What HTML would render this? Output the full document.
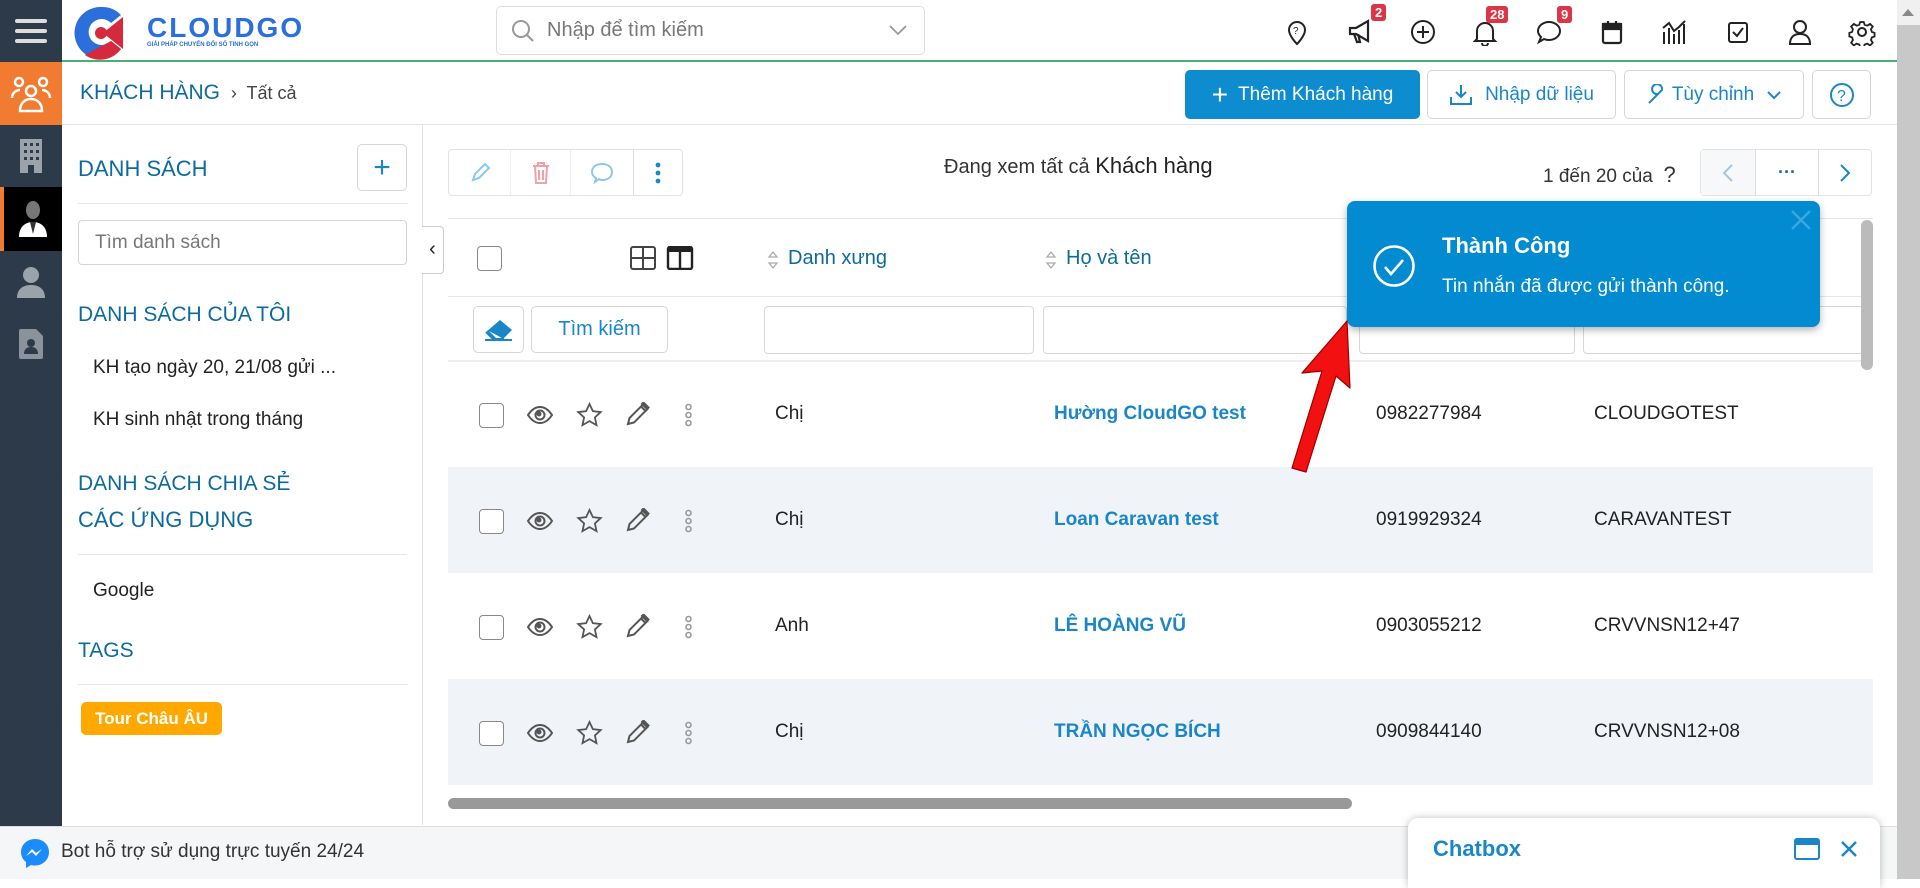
<!DOCTYPE html>
<html><head><meta charset="utf-8">
<style>
*{box-sizing:border-box;margin:0;padding:0}
body{width:1920px;height:879px;overflow:hidden;background:#fff;font-family:"Liberation Sans","Noto Sans CJK SC",sans-serif;color:#222;position:relative}
.abs{position:absolute}
.side{left:0;top:0;width:62px;height:826px;background:#2c3a4a}
.sideitem{position:absolute;left:0;width:62px;display:flex;align-items:center;justify-content:center}
.top{left:62px;top:0;width:1835px;height:62px;border-bottom:2px solid #4caf72;background:#fff}
.hdr2{left:62px;top:62px;width:1835px;height:63px;border-bottom:1px solid #e2e2e2}
.btn{position:absolute;border:1px solid #d6d6d6;border-radius:5px;background:#fff;display:flex;align-items:center;justify-content:center;font-size:19px;color:#1a86c8}
.h{font-size:21px;color:#0d6a9c;position:absolute;left:78px}
.item{font-size:19px;position:absolute;left:93px;color:#222}
.line{position:absolute;height:1px;background:#e6e6e6}
.icon{position:absolute;top:18px;width:28px;height:28px}
.badge{position:absolute;background:#dc3545;color:#fff;font-size:13px;padding:1px 4px;border-radius:3px;font-weight:bold}
.row{position:absolute;left:448px;width:1425px;height:106px}
.cb{position:absolute;width:25px;height:25px;border:1.5px solid #888;border-radius:4px;background:#fff}
.inp{position:absolute;top:306px;height:48px;border:1px solid #d8d8d8;border-radius:4px}
</style></head><body>

<div class="abs side"></div>
<div class="sideitem" style="top:0;height:62px">
<svg width="36" height="30"><rect x="2" y="3" width="32" height="4" rx="2" fill="#ddd"/><rect x="2" y="13" width="32" height="4" rx="2" fill="#ddd"/><rect x="2" y="23" width="32" height="4" rx="2" fill="#ddd"/></svg></div>
<div class="sideitem" style="top:62px;height:63px;background:#f07b31">
<svg width="44" height="40" fill="none" stroke="#fff" stroke-width="2.5"><circle cx="10" cy="8" r="4"/><circle cx="34" cy="8" r="4"/><circle cx="22" cy="17" r="5"/><path d="M3 24c0-5 4-8 8-8M41 24c0-5-4-8-8-8M11 37c0-8 5-12 11-12s11 4 11 12z"/></svg></div>
<div class="sideitem" style="top:125px;height:62px"><svg width="22" height="34"><rect x="0" y="0" width="22" height="34" fill="#9aa3ab"/><g fill="#2c3a4a"><rect x="4" y="4" width="3" height="3"/><rect x="10" y="4" width="3" height="3"/><rect x="16" y="4" width="3" height="3"/><rect x="4" y="11" width="3" height="3"/><rect x="10" y="11" width="3" height="3"/><rect x="16" y="11" width="3" height="3"/><rect x="4" y="18" width="3" height="3"/><rect x="10" y="18" width="3" height="3"/><rect x="16" y="18" width="3" height="3"/><rect x="8" y="26" width="6" height="8"/></g></svg></div>
<div class="sideitem" style="top:187px;height:64px;background:#000;border-left:4px solid #f07b31"><svg width="30" height="36"><ellipse cx="15" cy="9" rx="7" ry="9" fill="#777"/><path d="M1 36c0-10 6-15 14-15s14 5 14 15z" fill="#fff"/><path d="M12 21l3 12 3-12z" fill="#333"/></svg></div>
<div class="sideitem" style="top:251px;height:61px"><svg width="30" height="32" fill="#9aa3ab"><circle cx="15" cy="9" r="8"/><path d="M1 32c0-9 6-13 14-13s14 4 14 13z"/></svg></div>
<div class="sideitem" style="top:312px;height:64px"><svg width="24" height="30"><path d="M2 0h15l7 7v21a2 2 0 0 1-2 2H2a2 2 0 0 1-2-2V2a2 2 0 0 1 2-2z" fill="#8a939c"/><circle cx="12" cy="14" r="4" fill="#2c3a4a"/><path d="M5 25c0-5 3-7 7-7s7 2 7 7z" fill="#2c3a4a"/></svg></div>

<div class="abs top"></div>
<svg class="abs" style="left:71px;top:5px" width="64" height="56"><path d="M30 2a26 26 0 1 0 20 42l-10-8a13 13 0 1 1 0-18l10-8A26 26 0 0 0 30 2z" fill="#2a6fdb"/><path d="M52 12L32 28l20 16z" fill="#d42a3c"/><circle cx="30" cy="28" r="6" fill="#d42a3c"/><path d="M14 50a26 26 0 0 0 36-6l-10-8z" fill="#d42a3c"/></svg>
<div class="abs" style="left:147px;top:12px;font-size:28px;font-weight:bold;color:#2a6fdb;letter-spacing:2px">CLOUDGO</div>
<div class="abs" style="left:147px;top:42px;font-size:6px;color:#2a6fdb;font-weight:bold">GIẢI PHÁP CHUYỂN ĐỔI SỐ TINH GỌN</div>
<div class="abs" style="left:496px;top:6px;width:429px;height:49px;border:1px solid #ddd;border-radius:5px"></div>
<svg class="abs" style="left:510px;top:18px" width="26" height="26" fill="none" stroke="#999" stroke-width="2"><circle cx="11" cy="11" r="8"/><path d="M17 17l6 6"/></svg>
<div class="abs" style="left:547px;top:19px;font-size:20px;color:#777">Nhập để tìm kiếm</div>
<svg class="abs" style="left:888px;top:24px" width="20" height="12" fill="none" stroke="#999" stroke-width="1.8"><path d="M2 2l8 8 8-8"/></svg>

<svg class="icon" style="left:1283px" fill="none" stroke="#222" stroke-width="2"><path d="M14 26s-8-8-8-14a8 8 0 0 1 16 0c0 6-8 14-8 14z"/><text x="10" y="16" font-size="10" fill="#222" stroke="none">?</text></svg>
<svg class="icon" style="left:1346px" fill="none" stroke="#222" stroke-width="2.2"><path d="M4 10h6l12-7v20l-12-7H4zM8 16l3 8h3l-2-8"/></svg>
<div class="badge" style="left:1371px;top:4px">2</div>
<svg class="icon" style="left:1409px" fill="none" stroke="#222" stroke-width="2"><circle cx="14" cy="14" r="11"/><path d="M14 8v12M8 14h12"/></svg>
<svg class="icon" style="left:1471px" fill="none" stroke="#222" stroke-width="2"><path d="M6 21V13a8 8 0 0 1 16 0v8l2 2H4zM11 25a3 3 0 0 0 6 0"/></svg>
<div class="badge" style="left:1486px;top:6px">28</div>
<svg class="icon" style="left:1535px" fill="none" stroke="#222" stroke-width="2"><path d="M14 4c6 0 11 4 11 9s-5 9-11 9c-2 0-3 0-5-1l-5 3 2-5c-2-2-3-4-3-6 0-5 5-9 11-9z"/></svg>
<div class="badge" style="left:1557px;top:6px">9</div>
<svg class="icon" style="left:1598px" fill="none" stroke="#222" stroke-width="2.2"><rect x="5" y="6" width="18" height="19" rx="2"/><path d="M5 10h18M10 3v5M18 3v5" /><rect x="5" y="6" width="18" height="5" fill="#222"/></svg>
<svg class="icon" style="left:1660px" fill="none" stroke="#222" stroke-width="2"><path d="M4 26V14M9 26V10M14 26V16M19 26V12M24 26V6M3 10l6-5 5 8 5-4 6-6"/></svg>
<svg class="icon" style="left:1724px" fill="none" stroke="#222" stroke-width="2"><rect x="5" y="5" width="18" height="19" rx="2"/><path d="M9 14l4 4 6-8"/></svg>
<svg class="icon" style="left:1786px" fill="none" stroke="#222" stroke-width="2"><circle cx="14" cy="9" r="6"/><path d="M4 26c0-7 4-10 10-10s10 3 10 10z"/></svg>
<svg class="icon" style="left:1848px" fill="none" stroke="#222" stroke-width="2"><circle cx="14" cy="14" r="4"/><path d="M12 3h4l1 3 3 1 3-2 3 3-2 3 1 3 3 1v4l-3 1-1 3 2 3-3 3-3-2-3 1-1 3h-4l-1-3-3-1-3 2-3-3 2-3-1-3-3-1v-4l3-1 1-3-2-3 3-3 3 2 3-1z" transform="scale(.9) translate(1.5 1.5)"/></svg>

<div class="abs hdr2"></div>
<div class="abs" style="left:80px;top:81px;font-size:21px;color:#0d6a9c">KHÁCH HÀNG <span style="color:#444;font-size:18px">&nbsp;›&nbsp; Tất cả</span></div>
<div class="btn" style="left:1185px;top:70px;width:235px;height:49px;background:#0d8dd0;border-color:#0d8dd0;color:#fff"><span style="font-size:28px;margin-right:10px;font-weight:300">+</span>Thêm Khách hàng</div>
<div class="btn" style="left:1427px;top:70px;width:189px;height:49px"><svg width="24" height="24" fill="none" stroke="#1a86c8" stroke-width="2" style="margin-right:12px"><path d="M12 2v12M7 9l5 5 5-5M2 14v7h20v-7"/></svg>Nhập dữ liệu</div>
<div class="btn" style="left:1624px;top:70px;width:180px;height:49px"><svg width="22" height="22" fill="none" stroke="#1a86c8" stroke-width="2" style="margin-right:4px"><path d="M3 19l9-9a5 5 0 1 1 4-4l-9 9z"/></svg>Tùy chỉnh<svg width="16" height="10" fill="none" stroke="#1a86c8" stroke-width="2" style="margin-left:12px"><path d="M2 2l6 6 6-6"/></svg></div>
<div class="btn" style="left:1812px;top:70px;width:59px;height:49px"><svg width="26" height="26" fill="none" stroke="#1a86c8" stroke-width="2"><circle cx="13" cy="13" r="11"/><text x="8" y="19" font-size="16" fill="#1a86c8" stroke="none">?</text></svg></div>

<div class="abs" style="left:422px;top:125px;width:1px;height:700px;background:#e2e2e2"></div>
<div class="h" style="top:156px;font-size:22px">DANH SÁCH</div>
<div class="btn" style="left:357px;top:144px;width:50px;height:47px;font-size:30px;font-weight:300">+</div>
<div class="line" style="left:78px;top:203px;width:329px"></div>
<div class="abs" style="left:78px;top:220px;width:329px;height:45px;border:1px solid #d6d6d6;border-radius:4px;font-size:19px;color:#777;padding:11px 0 0 16px">Tìm danh sách</div>
<div class="h" style="top:303px">DANH SÁCH CỦA TÔI</div>
<div class="item" style="top:357px">KH tạo ngày 20, 21/08 gửi ...</div>
<div class="item" style="top:409px">KH sinh nhật trong tháng</div>
<div class="abs" style="left:78px;top:470px;height:20px;overflow:hidden;width:300px"><div style="font-size:21px;color:#0d6a9c;line-height:24px;margin-top:2px">DANH SÁCH CHIA SẺ</div></div>
<div class="h" style="top:507px;font-size:22px">CÁC ỨNG DỤNG</div>
<div class="line" style="left:78px;top:554px;width:329px"></div>
<div class="item" style="top:580px">Google</div>
<div class="h" style="top:639px">TAGS</div>
<div class="line" style="left:78px;top:684px;width:329px"></div>
<div class="abs" style="left:81px;top:702px;width:141px;height:33px;background:#ffa800;border-radius:5px;color:#fff;font-weight:bold;font-size:17px;text-align:center;line-height:33px">Tour Châu ÂU</div>
<div class="abs" style="left:422px;top:226px;width:22px;height:48px;border:1px solid #ccc;border-left:none;border-radius:0 4px 4px 0;background:#fff;font-size:20px;text-align:center;line-height:44px">‹</div>

<div class="abs" style="left:448px;top:149px;width:235px;height:47px;border:1px solid #e2e2e2;border-radius:4px;display:flex">
<div style="width:62px;border-right:1px solid #eee;display:flex;align-items:center;justify-content:center"><svg width="22" height="22" fill="none" stroke="#8cc8ec" stroke-width="2"><path d="M4 18l2-6 10-10 4 4-10 10z"/></svg></div>
<div style="width:60px;border-right:1px solid #eee;display:flex;align-items:center;justify-content:center"><svg width="20" height="24" fill="none" stroke="#f2a0a8" stroke-width="2"><path d="M2 5h16M7 5V2h6v3M4 5l1 17h10l1-17M8 9v10M12 9v10"/></svg></div>
<div style="width:63px;border-right:1px solid #ddd;display:flex;align-items:center;justify-content:center"><svg width="24" height="22" fill="none" stroke="#8cc8ec" stroke-width="2"><path d="M12 2c6 0 10 3 10 8s-4 8-10 8c-1 0-2 0-3-1l-4 3 1-4c-2-1-4-3-4-6 0-5 4-8 10-8z"/></svg></div>
<div style="flex:1;display:flex;align-items:center;justify-content:center"><svg width="6" height="22" fill="#1a86c8"><circle cx="3" cy="3" r="2.4"/><circle cx="3" cy="11" r="2.4"/><circle cx="3" cy="19" r="2.4"/></svg></div>
</div>
<div class="abs" style="left:944px;top:153px;font-size:20px;color:#333">Đang xem tất cả <span style="font-size:22px;color:#222">Khách hàng</span></div>
<div class="abs" style="left:1543px;top:162px;font-size:19px;color:#333">1 đến 20 của &nbsp;<span style="font-size:22px">?</span></div>
<div class="abs" style="left:1700px;top:149px;width:172px;height:47px;border:1px solid #e2e2e2;border-radius:4px;display:flex">
<div style="width:55px;background:#f7f8f9;border-right:1px solid #ddd;display:flex;align-items:center;justify-content:center"><svg width="12" height="20" fill="none" stroke="#9cc8e8" stroke-width="2"><path d="M10 2L2 10l8 8"/></svg></div>
<div style="width:63px;border-right:1px solid #ddd;display:flex;align-items:center;justify-content:center;color:#1a6aa8;font-weight:bold;font-size:18px">···</div>
<div style="flex:1;display:flex;align-items:center;justify-content:center"><svg width="12" height="20" fill="none" stroke="#1a86c8" stroke-width="2"><path d="M2 2l8 8-8 8"/></svg></div>
</div>

<div class="line" style="left:448px;top:218px;width:1425px"></div>
<div class="cb" style="left:477px;top:246px"></div>
<svg class="abs" style="left:630px;top:246px" width="64" height="24"><rect x="1" y="1" width="24" height="22" rx="2" fill="none" stroke="#444" stroke-width="2"/><path d="M13 1v22M1 12h24" stroke="#444" stroke-width="2"/><rect x="38" y="1" width="24" height="22" rx="2" fill="none" stroke="#222" stroke-width="2.4"/><rect x="38" y="1" width="24" height="5" fill="#222"/><path d="M50 1v22" stroke="#222" stroke-width="2.4"/></svg>
<svg class="abs" style="left:767px;top:250px" width="12" height="20" fill="none" stroke="#aaa" stroke-width="1.3"><path d="M2 7l4-5 4 5zM2 13l4 5 4-5z"/></svg>
<div class="abs" style="left:788px;top:247px;font-size:20px;color:#0d6a9c">Danh xưng</div>
<svg class="abs" style="left:1045px;top:250px" width="12" height="20" fill="none" stroke="#aaa" stroke-width="1.3"><path d="M2 7l4-5 4 5zM2 13l4 5 4-5z"/></svg>
<div class="abs" style="left:1066px;top:247px;font-size:20px;color:#0d6a9c">Họ và tên</div>
<div class="line" style="left:448px;top:296px;width:1425px"></div>
<div class="btn" style="left:473px;top:306px;width:51px;height:47px"><svg width="30" height="24"><path d="M16 2l12 10-8 8H8L2 14z" fill="#1a86c8"/><path d="M2 14l6 6h12" fill="none" stroke="#1a86c8" stroke-width="2"/><path d="M5 13l7 7h6" fill="#fff"/><path d="M1 22h27" stroke="#1a86c8" stroke-width="2"/></svg></div>
<div class="btn" style="left:531px;top:306px;width:137px;height:47px;font-size:20px">Tìm kiếm</div>
<div class="inp" style="left:764px;width:270px"></div>
<div class="inp" style="left:1043px;width:304px"></div>
<div class="inp" style="left:1359px;width:216px"></div>
<div class="inp" style="left:1583px;width:290px"></div>
<div class="abs" style="left:448px;top:360px;width:1425px;height:2px;background:#eee"></div>

<div class="row" style="top:362px;background:#fff"></div>
<div class="row" style="top:467px;background:#f0f4f8"></div>
<div class="row" style="top:573px;background:#fff"></div>
<div class="row" style="top:679px;background:#f0f4f8"></div>

<div id="rows"></div>
<script>
var data=[["Chị","Hường CloudGO test","0982277984","CLOUDGOTEST"],["Chị","Loan Caravan test","0919929324","CARAVANTEST"],["Anh","LÊ HOÀNG VŨ","0903055212","CRVVNSN12+47"],["Chị","TRẦN NGỌC BÍCH","0909844140","CRVVNSN12+08"]];
var h="";
data.forEach(function(d,i){var c=362+i*106+53;
h+='<div class="cb" style="left:479px;top:'+(c-12)+'px"></div>';
h+='<svg class="abs" style="left:526px;top:'+(c-12)+'px" width="28" height="24" fill="none" stroke="#555" stroke-width="2"><path d="M2 12c4-6 8-8 12-8s8 2 12 8c-4 6-8 8-12 8s-8-2-12-8z"/><circle cx="14" cy="12" r="4.5"/><circle cx="13" cy="11" r="1.5" fill="#555"/></svg>';
h+='<svg class="abs" style="left:576px;top:'+(c-13)+'px" width="27" height="26" fill="none" stroke="#555" stroke-width="1.8"><path d="M13.5 2l3.4 7.2 7.8.9-5.8 5.3 1.6 7.7-7-4-7 4 1.6-7.7L2.3 10.1l7.8-.9z"/></svg>';
h+='<svg class="abs" style="left:625px;top:'+(c-13)+'px" width="25" height="25" fill="none" stroke="#555" stroke-width="2"><path d="M3 22l1.5-6L18 2.5l4.5 4.5L9 20.5z"/><path d="M16 4.5l4.5 4.5" /><path d="M17 2l5 5 1.5-1.5-5-5z" fill="#555"/></svg>';
h+='<svg class="abs" style="left:684px;top:'+(c-12)+'px" width="9" height="24" fill="none" stroke="#999" stroke-width="1.6"><circle cx="4.5" cy="4" r="2.5"/><circle cx="4.5" cy="12" r="2.5"/><circle cx="4.5" cy="20" r="2.5"/></svg>';
h+='<div class="abs" style="left:775px;top:'+(c-12)+'px;font-size:19px">'+d[0]+'</div>';
h+='<div class="abs" style="left:1054px;top:'+(c-12)+'px;font-size:19px;color:#1a86c8;font-weight:bold">'+d[1]+'</div>';
h+='<div class="abs" style="left:1376px;top:'+(c-12)+'px;font-size:19px">'+d[2]+'</div>';
h+='<div class="abs" style="left:1594px;top:'+(c-12)+'px;font-size:19px">'+d[3]+'</div>';});
document.getElementById("rows").innerHTML=h;
</script>
<div class="abs" style="left:448px;top:798px;width:904px;height:11px;background:#999;border-radius:6px"></div>
<div class="abs" style="left:1861px;top:220px;width:12px;height:150px;background:#bbb;border-radius:6px"></div>
<div class="abs" style="left:1897px;top:0;width:23px;height:879px;background:#c8c8c8"></div>
<div class="abs" style="left:1897px;top:0;width:23px;height:25px;background:#f0f0f0"></div>
<svg class="abs" style="left:1902px;top:8px" width="12" height="8"><path d="M0 8l6-7 6 7z" fill="#888"/></svg>

<div class="abs" style="left:0;top:826px;width:1897px;height:53px;background:#f4f6f7;border-top:1px solid #ddd"></div>
<svg class="abs" style="left:19px;top:837px" width="32" height="32"><path d="M16 2C8 2 2 8 2 15c0 4 2 8 5 10v6l5-3c1 .3 2.5.5 4 .5 8 0 14-6 14-13.5S24 2 16 2z" fill="#1a8cff"/><path d="M7 19l6-7 4 4 6-4-6 7-4-4z" fill="#fff"/></svg>
<div class="abs" style="left:61px;top:841px;font-size:19px;color:#333">Bot hỗ trợ sử dụng trực tuyến 24/24</div>

<div class="abs" style="left:1408px;top:818px;width:472px;height:70px;background:#fff;border-radius:10px 10px 0 0;box-shadow:0 0 8px rgba(0,0,0,.25)"></div>
<div class="abs" style="left:1433px;top:836px;font-size:22px;font-weight:bold;color:#1a86c8">Chatbox</div>
<svg class="abs" style="left:1794px;top:838px" width="26" height="22"><rect x="1" y="1" width="24" height="20" rx="2" fill="none" stroke="#1a86c8" stroke-width="2"/><rect x="1" y="1" width="24" height="6" fill="#1a86c8"/></svg>
<svg class="abs" style="left:1840px;top:840px" width="18" height="18" stroke="#1a86c8" stroke-width="2.4"><path d="M2 2l14 14M16 2L2 16"/></svg>

<div class="abs" style="left:1347px;top:201px;width:473px;height:126px;background:#028bd0;border-radius:8px;box-shadow:0 3px 8px rgba(0,0,0,.3)"></div>
<svg class="abs" style="left:1790px;top:209px" width="22" height="22" stroke="#3aa8e0" stroke-width="2.4"><path d="M2 2l18 18M20 2L2 20"/></svg>
<svg class="abs" style="left:1372px;top:244px" width="44" height="44" fill="none" stroke="#fff" stroke-width="2.6"><circle cx="22" cy="22" r="19.5"/><path d="M13 23l6 7 12-14"/></svg>
<div class="abs" style="left:1442px;top:233px;font-size:22px;color:#fff;font-weight:bold">Thành Công</div>
<div class="abs" style="left:1442px;top:276px;font-size:19px;color:#fff">Tin nhắn đã được gửi thành công.</div>

<svg class="abs" style="left:1280px;top:315px" width="90" height="160"><path d="M67 6L22 58l20-2-30 97 14 4 30-96 14 12z" fill="#f21010" stroke="#900" stroke-width="1.2" stroke-linejoin="round"/></svg>
</body></html>
